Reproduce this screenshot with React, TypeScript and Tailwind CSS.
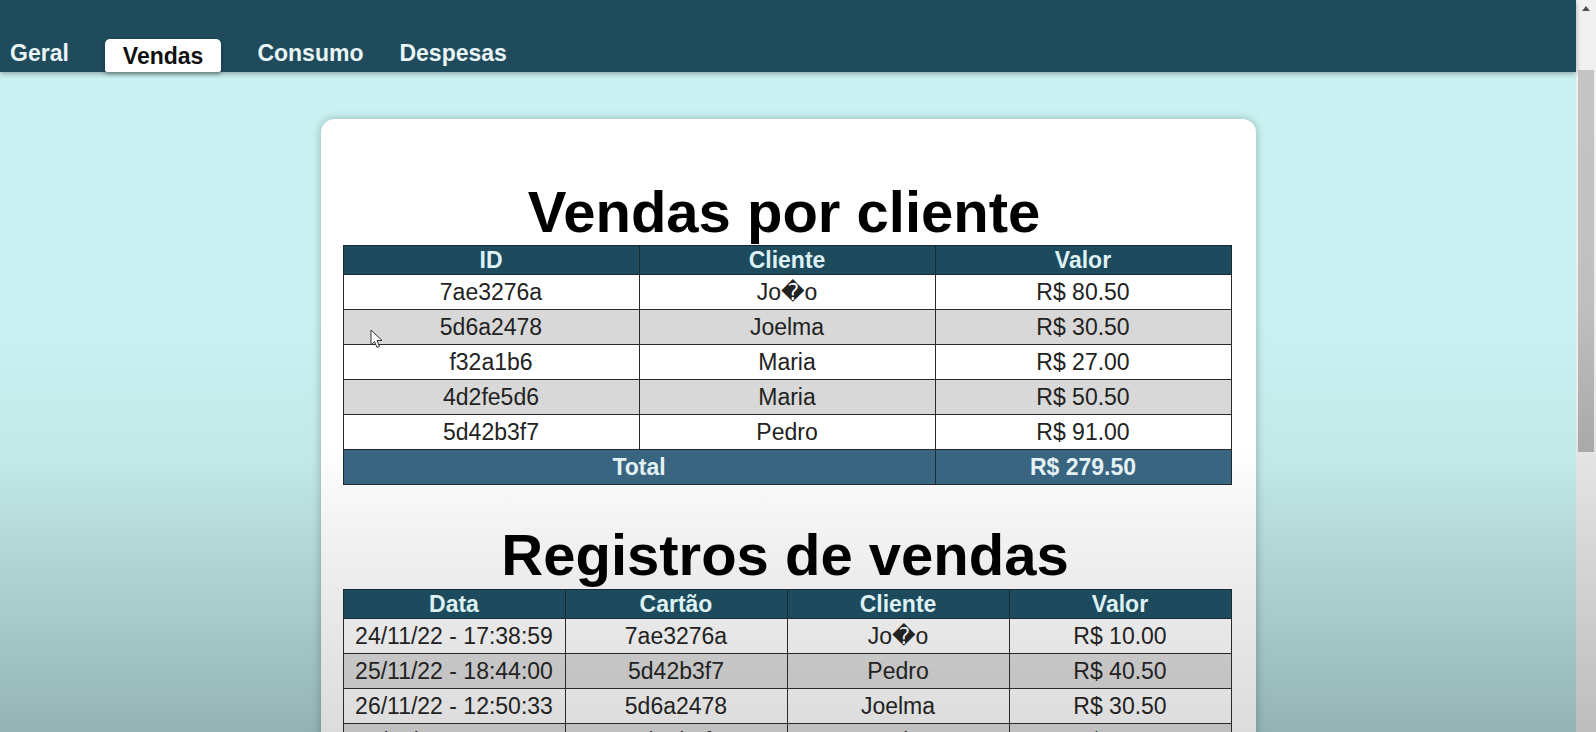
import React from "react";

const porCliente = [
  { id: "7ae3276a", cliente: "Jo\uFFFDo", valor: "R$ 80.50" },
  { id: "5d6a2478", cliente: "Joelma", valor: "R$ 30.50" },
  { id: "f32a1b6", cliente: "Maria", valor: "R$ 27.00" },
  { id: "4d2fe5d6", cliente: "Maria", valor: "R$ 50.50" },
  { id: "5d42b3f7", cliente: "Pedro", valor: "R$ 91.00" },
];

const registros = [
  { data: "24/11/22 - 17:38:59", cartao: "7ae3276a", cliente: "Jo\uFFFDo", valor: "R$ 10.00" },
  { data: "25/11/22 - 18:44:00", cartao: "5d42b3f7", cliente: "Pedro", valor: "R$ 40.50" },
  { data: "26/11/22 - 12:50:33", cartao: "5d6a2478", cliente: "Joelma", valor: "R$ 30.50" },
  { data: "28/11/22 - 15:33:18", cartao: "5d42b3f7", cliente: "Pedro", valor: "R$ 50.50" },
];

const th = "border border-[#1a2a30] bg-[#1d4b5d] text-[#def1f3] font-bold h-[29px] leading-[27px] p-0";
const td = "border border-[#2a2a2a] h-[35px] leading-[33px] p-0 text-[#222]";

function Tab({ label, active }: { label: string; active?: boolean }) {
  if (active) {
    return (
      <div className="h-[33px] px-[18px] pt-[4px] leading-[27px] bg-white text-[#111] rounded-t-[5px] rounded-b-[2px] shadow-[0_2px_4px_rgba(0,0,0,0.35)]">
        {label}
      </div>
    );
  }
  return <div className="leading-[27px] mb-[5px] text-[#eaf5f6]">{label}</div>;
}

export default function App() {
  return (
    <div
      className="flex h-[732px] w-full overflow-hidden relative"
      style={{ fontFamily: '"Liberation Sans", Arial, "DejaVu Sans", sans-serif' }}
    >
      <div className="flex-1 flex flex-col bg-[linear-gradient(to_bottom,#caf2f2_0px,#caf2f2_320px,#c2e8e8_460px,#94b4b4_732px)]">
        <header className="h-[72px] shrink-0 bg-[#1f4b5c] flex items-end gap-[36px] pl-[10px] text-[23px] font-bold shadow-[0_2px_5px_rgba(0,0,0,0.3)] relative z-10">
          <Tab label="Geral" />
          <Tab label="Vendas" active />
          <Tab label="Consumo" />
          <Tab label="Despesas" />
        </header>

        <main className="flex-1 pt-[47px]">
          <div className="w-[935px] mx-auto h-[700px] rounded-[14px] pl-[22px] pr-[24px] pt-[64px] shadow-[0_0_10px_rgba(0,0,0,0.28)] bg-[linear-gradient(to_bottom,#ffffff_0px,#ffffff_330px,#f1f1f1_420px,#dcdcdc_613px)] text-[23px]">
            <h1 className="text-[58px] leading-[58px] font-bold text-center text-black mb-[4px] pr-[6px]">
              Vendas por cliente
            </h1>
            <table className="w-full table-fixed border-collapse text-center">
              <thead>
                <tr>
                  <th className={th}>ID</th>
                  <th className={th}>Cliente</th>
                  <th className={th}>Valor</th>
                </tr>
              </thead>
              <tbody>
                {porCliente.map((r, i) => (
                  <tr key={r.id} className={i % 2 === 1 ? "bg-[#d8d8d8]" : "bg-white"}>
                    <td className={td}>{r.id}</td>
                    <td className={td}>{r.cliente}</td>
                    <td className={td}>{r.valor}</td>
                  </tr>
                ))}
                <tr className="bg-[#3a6581] text-[#e4f2f5] font-bold">
                  <td colSpan={2} className="border border-[#1a2a30] h-[35px] leading-[33px] p-0">
                    Total
                  </td>
                  <td className="border border-[#1a2a30] h-[35px] leading-[33px] p-0">R$ 279.50</td>
                </tr>
              </tbody>
            </table>

            <h1 className="text-[58px] leading-[58px] font-bold text-center text-black mt-[41px] mb-[5px] pr-[4px]">
              Registros de vendas
            </h1>
            <table className="w-full table-fixed border-collapse text-center">
              <thead>
                <tr>
                  <th className={th}>Data</th>
                  <th className={th}>Cartão</th>
                  <th className={th}>Cliente</th>
                  <th className={th}>Valor</th>
                </tr>
              </thead>
              <tbody>
                {registros.map((r, i) => (
                  <tr key={r.data} className={i % 2 === 1 ? "bg-black/[0.13]" : "bg-transparent"}>
                    <td className={td}>{r.data}</td>
                    <td className={td}>{r.cartao}</td>
                    <td className={td}>{r.cliente}</td>
                    <td className={td}>{r.valor}</td>
                  </tr>
                ))}
              </tbody>
            </table>
          </div>
        </main>
      </div>

      <div className="w-[20px] shrink-0 flex flex-col bg-[linear-gradient(to_bottom,#f1f1f1_0px,#ececec_400px,#bdbdbd_732px)]">
        <div className="h-[17px] flex items-center justify-center">
          <svg width="8" height="5" viewBox="0 0 8 5">
            <path d="M0 5 L4 0 L8 5 Z" fill="#505050" />
          </svg>
        </div>
        <div className="mt-[53px] mx-[2px] h-[382px] bg-[linear-gradient(to_bottom,#c4c4c4,#c0c0c0_60%,#a9a9a9)]" />
      </div>

      <svg className="absolute left-[370px] top-[329px] pointer-events-none" width="13" height="20" viewBox="0 0 13 20">
        <path d="M1 1 L1 16 L4.5 12.5 L7 18.5 L9.5 17.5 L7 11.5 L12 11.5 Z" fill="#fff" stroke="#333" strokeWidth="1" strokeLinejoin="round" />
      </svg>
    </div>
  );
}
